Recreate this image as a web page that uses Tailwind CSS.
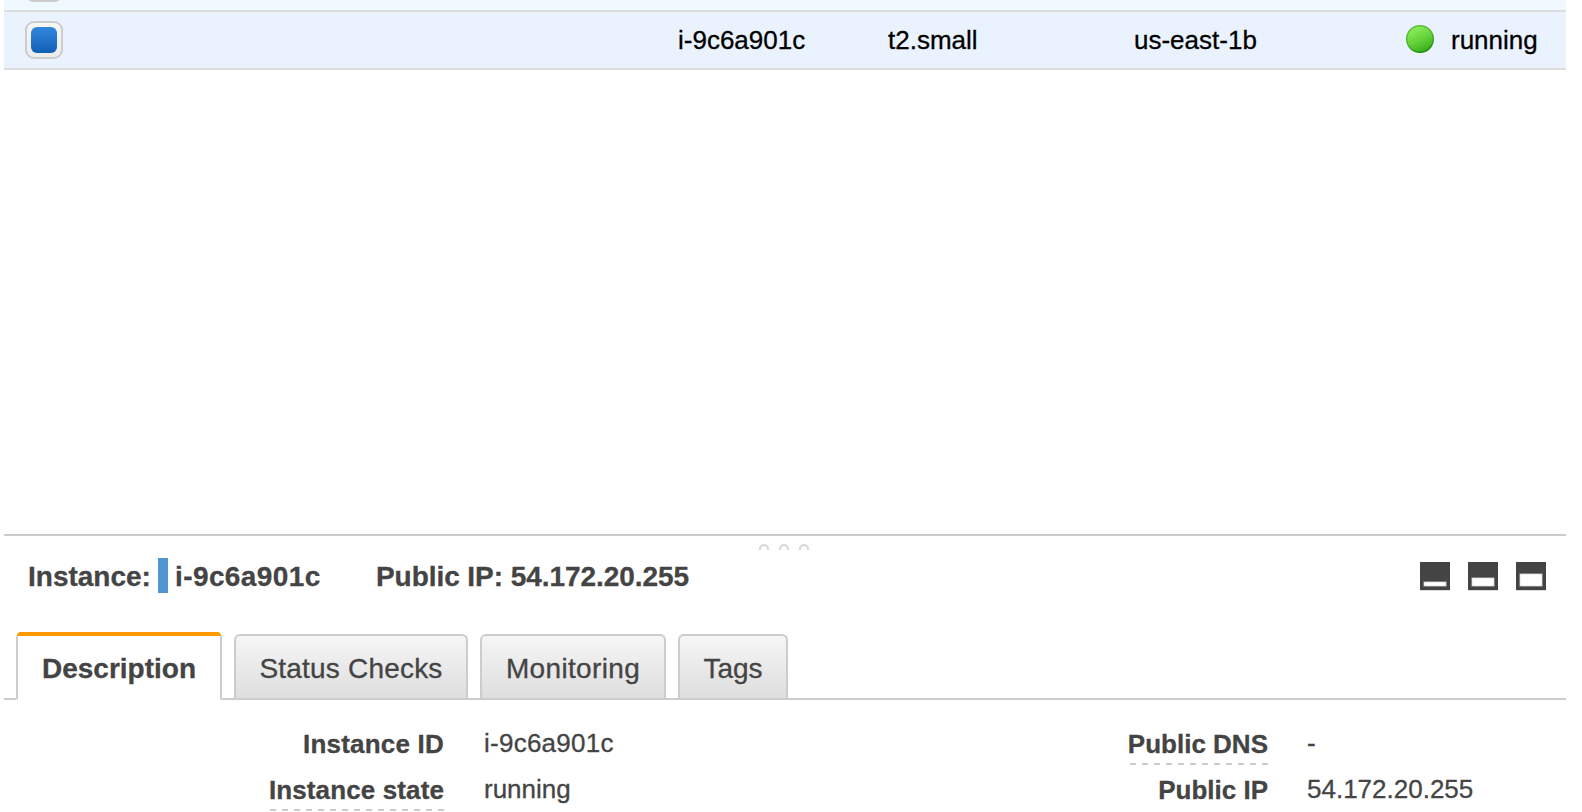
<!DOCTYPE html>
<html lang="en">
<head>
<meta charset="utf-8">
<title>EC2 Instances</title>
<script src="https://cdn.jsdelivr.net/npm/@tailwindcss/browser@4"></script>
</head>
<body class="bg-white overflow-hidden h-[812px] font-['Liberation_Sans',Arial,sans-serif] text-[26px] text-[#444] [-webkit-text-stroke:0.3px]">
<main class="ml-1 w-[1562px] h-[812px] flex flex-col overflow-hidden">
  <!-- instance table -->
  <section class="h-[534px] shrink-0 text-black">
    <div class="h-3 bg-[#f0f8ff] border-b-2 border-[#ddd] overflow-hidden flex items-end pb-2 pl-[21px]">
      <span class="size-[38px] shrink-0 rounded-[9px] border-2 border-[#ccc] bg-[#f3f3f3]"></span>
    </div>
    <div class="h-[58px] bg-[#eaf2fe] border-b-2 border-[#ddd] flex items-center leading-[56px] whitespace-nowrap">
      <div class="w-[674px] pl-[21px]">
        <span class="size-[38px] rounded-[9px] border-2 border-[#ccc] bg-linear-to-b from-[#f7f7f7] to-[#ececec] flex items-center justify-center">
          <span class="size-[26px] rounded-[6px] bg-linear-to-b from-[#3287dc] to-[#1060b6]"></span>
        </span>
      </div>
      <span class="w-[210px]">i-9c6a901c</span>
      <span class="w-[246px]">t2.small</span>
      <span class="w-[271px]">us-east-1b</span>
      <svg class="w-[30px] h-[30px] mr-4 -mt-[2px]" viewBox="0 0 30 30">
        <defs>
          <linearGradient id="g" x1=".3" y1="0" x2=".75" y2="1"><stop offset="0" stop-color="#8ff05e"/><stop offset=".55" stop-color="#62cf38"/><stop offset="1" stop-color="#33a818"/></linearGradient>
          <linearGradient id="r" x1=".3" y1="0" x2=".7" y2="1"><stop offset="0" stop-color="#62bd42"/><stop offset=".5" stop-color="#4cb52c"/><stop offset="1" stop-color="#0f8a08"/></linearGradient>
        </defs>
        <circle cx="15" cy="15" r="13.3" fill="url(#g)" stroke="url(#r)" stroke-width="1.4"/>
      </svg>
      <span>running</span>
    </div>
  </section>

  <!-- details pane -->
  <section class="grow flex flex-col border-t-2 border-[#ccc]">
    <div class="h-[14px] pt-2 pl-[755px] flex gap-[10px] overflow-hidden">
      <span class="size-[10px] shrink-0 rounded-full border-2 border-[#d6d6d6]"></span>
      <span class="size-[10px] shrink-0 rounded-full border-2 border-[#d6d6d6]"></span>
      <span class="size-[10px] shrink-0 rounded-full border-2 border-[#d6d6d6]"></span>
    </div>
    <div class="h-[82px] pt-2 pl-6 pr-5 flex items-start font-bold text-[28px] leading-[37px] whitespace-nowrap">
      <span class="w-[130px]">Instance:</span>
      <span class="w-[10px] h-[35px] bg-[#5294cf]"></span>
      <span class="w-[208px] pl-[7px] tracking-[0.4px]">i-9c6a901c</span>
      <span class="tracking-[-0.06px]">Public IP: 54.172.20.255</span>
      <div class="ml-auto flex gap-[18px] pt-1">
        <svg class="w-[30px] h-[29px]" viewBox="0 0 30 29"><path fill="#444" d="M0 0h30v28H0z"/><path fill="#ddd" d="M0 28h30v1H0z"/><path fill="#fff" stroke="#8b8588" stroke-width=".6" d="M3.7 19.7h22.6v4.6H3.7z"/></svg>
        <svg class="w-[30px] h-[29px]" viewBox="0 0 30 29"><path fill="#444" d="M0 0h30v28H0z"/><path fill="#ddd" d="M0 28h30v1H0z"/><path fill="#fff" stroke="#8b8588" stroke-width=".6" d="M3.7 15.7h22.6v8.6H3.7z"/></svg>
        <svg class="w-[30px] h-[29px]" viewBox="0 0 30 29"><path fill="#444" d="M0 0h30v28H0z"/><path fill="#ddd" d="M0 28h30v1H0z"/><path fill="#fff" stroke="#8b8588" stroke-width=".6" d="M3.7 11.7h22.6v12.6H3.7z"/></svg>
      </div>
    </div>
    <nav class="h-[68px] flex items-end text-[28px] whitespace-nowrap">
      <span class="w-3 h-[2px] bg-[#ccc]"></span>
      <div class="w-[206px] h-[68px] flex flex-col">
        <div class="h-1 mx-px rounded-t-[4px] bg-[#f90]"></div>
        <div class="h-16 border-x-2 border-[#ccc] rounded-b-[2px] text-center leading-[66px] font-bold">Description</div>
      </div>
      <div class="grow h-[66px] flex gap-3 pl-3 border-b-2 border-[#ccc] leading-[66px] text-center">
        <div class="w-[234px] h-16 border-2 border-b-0 border-[#ccc] rounded-t-[6px] bg-linear-to-b from-[#f6f6f6] to-[#dedede] tracking-[0.2px]">Status Checks</div>
        <div class="w-[186px] h-16 border-2 border-b-0 border-[#ccc] rounded-t-[6px] bg-linear-to-b from-[#f6f6f6] to-[#dedede] tracking-[0.35px]">Monitoring</div>
        <div class="w-[110px] h-16 border-2 border-b-0 border-[#ccc] rounded-t-[6px] bg-linear-to-b from-[#f6f6f6] to-[#dedede]">Tags</div>
      </div>
    </nav>
    <dl class="grid grid-cols-[440px_384px_440px_1fr] auto-rows-[46px] pt-[21px] leading-[46px] whitespace-nowrap -ml-4 pl-4">
      <dt class="font-bold text-right tracking-[0.2px]">Instance ID</dt>
      <dd class="pl-10 -mt-px tracking-[0.25px]">i-9c6a901c</dd>
      <dt class="font-bold flex flex-col items-end"><span>Public DNS</span><svg class="w-[138px] h-[2px] -mt-[4px]" viewBox="0 0 138 2"><path d="M0 1h138" stroke="#ccc" stroke-width="2" stroke-dasharray="6"/></svg></dt>
      <dd class="pl-[39px] -mt-px">-</dd>
      <dt class="font-bold flex flex-col items-end"><span class="tracking-[0.12px]">Instance state</span><svg class="w-[174px] h-[2px] -mt-[4px]" viewBox="0 0 174 2"><path d="M0 1h174" stroke="#ccc" stroke-width="2" stroke-dasharray="6"/></svg></dt>
      <dd class="pl-10 -mt-px">running</dd>
      <dt class="font-bold text-right">Public IP</dt>
      <dd class="pl-[39px] -mt-px">54.172.20.255</dd>
    </dl>
  </section>
</main>
</body>
</html>
